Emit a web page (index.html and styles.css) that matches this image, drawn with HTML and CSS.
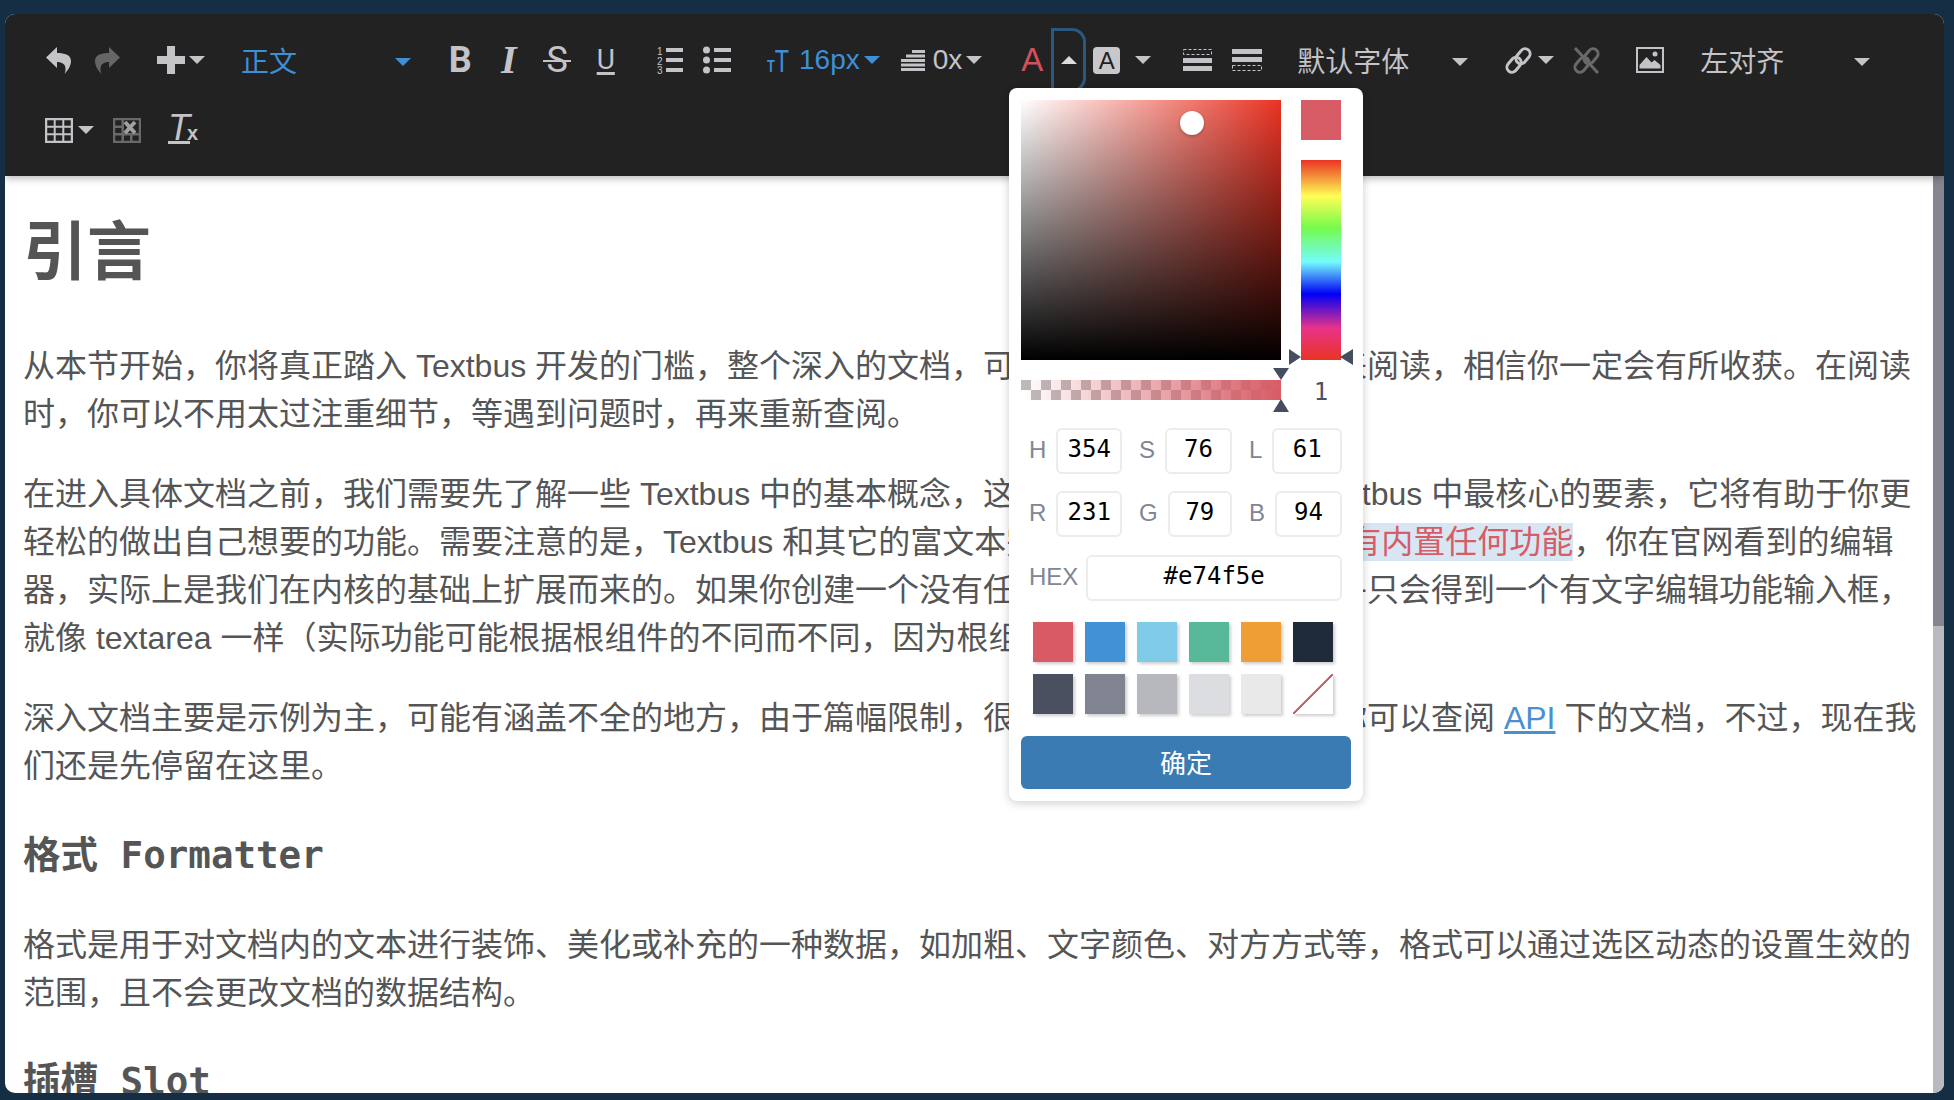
FILE: index.html
```html
<!DOCTYPE html>
<html>
<head>
    <meta charset="utf-8">
    <link rel="stylesheet" href="styles.css">
</head>
<body>
    <div class="editor">
        <div class="toolbar">
            <div class="tool-row">
                <div class="group group-history">
                    <span class="tool"><svg width="25" height="27" viewBox="0 0 25 27"><path class="fill" d="M11 0L0 10.5 11 21v-6c5 0 8.500 2 8.500 7 0 2-.5 4-1 5 3.500-4 6.500-8 6.500-13 0-6-6-8-14-8z"/></svg></span>
                    <span class="tool"><svg width="25" height="27" viewBox="0 0 25 27"><path class="fill-dim" d="M14 0l11 10.500L14 21v-6c-5 0-8.500 2-8.500 7 0 2 .5 4 1 5C3 23 0 19 0 14 0 8 6 6 14 6z"/></svg></span>
                </div>
                <div class="group group-insert">
                    <svg width="28" height="28" viewBox="0 0 28 28"><path class="fill" d="M10 0h8v10h10v8H18v10h-8V18H0v-8h10z"/></svg>
                    <i class="caret"></i>
                </div>
                <div class="select select-block active"><span>正文</span><i class="caret"></i></div>
                <div class="group group-inline">
                    <span class="tool glyph glyph-bold">B</span>
                    <span class="tool glyph glyph-italic">I</span>
                    <span class="tool glyph glyph-strike">S</span>
                    <span class="tool glyph glyph-under">U</span>
                </div>
                <div class="group group-list">
                    <span class="tool"><svg width="26" height="28" viewBox="0 0 26 28"><text class="list-num" x="0" y="9">1</text><text class="list-num" x="0" y="19">2</text><text class="list-num" x="0" y="28">3</text><path class="fill" d="M9 2h17v4H9zM9 12h17v4H9zM9 22h17v4H9z"/></svg></span>
                    <span class="tool"><svg width="28" height="28" viewBox="0 0 28 28"><circle class="fill" cx="3.500" cy="4" r="3.500"/><circle class="fill" cx="3.500" cy="14" r="3.500"/><circle class="fill" cx="3.500" cy="24" r="3.500"/><path class="fill" d="M11 2h17v4H11zM11 12h17v4H11zM11 22h17v4H11z"/></svg></span>
                </div>
                <div class="group group-size active">
                    <span class="size-icon"><small>T</small>T</span>
                    <span class="value value-size">16px</span>
                    <i class="caret"></i>
                </div>
                <div class="group group-line">
                    <svg width="24" height="21" viewBox="0 0 24 21"><path class="fill" d="M11 0h13v3H11zM5 4.500h19v3H5zM0 9h24v3H0zM0 13.500h24v3H0zM0 18h24v3H0z"/></svg>
                    <span class="value value-line">0x</span>
                    <i class="caret"></i>
                </div>
                <span class="text-color">A</span>
                <span class="color-toggle"><i class="caret caret-up"></i></span>
                <span class="back-color">A</span>
                <i class="caret caret-back"></i>
                <svg class="block-icon" width="29" height="22" viewBox="0 0 29 22"><rect class="dash" x=".5" y=".5" width="28" height="5"/><path class="fill" d="M0 9h29v5H0zM0 17h29v5H0z"/></svg>
                <svg class="block-icon block-icon-b" width="30" height="22" viewBox="0 0 30 22"><path class="fill" d="M0 0h30v5H0zM0 8h30v5H0z"/><rect class="dash" x=".5" y="16.500" width="29" height="5"/></svg>
                <div class="select select-font"><span>默认字体</span><i class="caret"></i></div>
                <div class="group group-link">
                    <svg width="27" height="27" viewBox="0 0 27 27"><g class="stroke stroke-link"><rect x="4" y="9.500" width="10" height="16.500" rx="5" transform="rotate(40 9 17.750)"/><rect x="13" y="1" width="10" height="16.500" rx="5" transform="rotate(40 18 9.250)"/></g></svg>
                    <i class="caret"></i>
                </div>
                <svg class="unlink-icon" width="27" height="27" viewBox="0 0 27 27"><g class="stroke stroke-link stroke-dim"><rect x="4" y="9.500" width="10" height="16.500" rx="5" transform="rotate(40 9 17.750)"/><rect x="13" y="1" width="10" height="16.500" rx="5" transform="rotate(40 18 9.250)"/><path d="M2 1l23 25"/></g></svg>
                <svg class="image-icon" width="28" height="26" viewBox="0 0 28 26"><rect class="stroke" x="1" y="1" width="26" height="24"/><path class="fill" d="M3.500 21.500V18l7-8 5 5.500 3-2.500 6 5v3.500z"/><circle class="fill" cx="19" cy="7" r="2.500"/></svg>
                <div class="select select-align"><span>左对齐</span><i class="caret"></i></div>
            </div>
            <div class="tool-row">
                <div class="group group-table">
                    <svg width="28" height="25" viewBox="0 0 28 25"><rect class="stroke stroke-table" x="1" y="1" width="26" height="23"/><path class="stroke" d="M9.700 1v23M18.300 1v23M1 8.700h26M1 16.300h26"/></svg>
                    <i class="caret"></i>
                </div>
                <svg class="cell-icon" width="28" height="25" viewBox="0 0 28 25"><g class="stroke stroke-dim stroke-table"><rect x="1" y="1" width="26" height="23"/><path d="M9.700 1v23M1 8.700h10M1 16.300h26M18.300 17v7"/></g><path class="cross" d="M12 4l10 11M22 4L12 15"/></svg>
                <span class="clear-format"><em>T</em><small>x</small></span>
            </div>
        </div>

        <div class="doc">
            <div class="content">
                <h1>引言</h1>
                <p>从本节开始，你将真正踏入 Textbus 开发的门槛，整个深入的文档，可能需要你花费一些时间来阅读，相信你一定会有所收获。在阅读时，你可以不用太过注重细节，等遇到问题时，再来重新查阅。</p>
                <p>在进入具体文档之前，我们需要先了解一些 Textbus 中的基本概念，这些基本概念也是整个 Textbus 中最核心的要素，它将有助于你更轻松的做出自己想要的功能。需要注意的是，Textbus 和其它的富文本完全不同，Textbus 并没<span class="picked">有内置任何功能</span>，你在官网看到的编辑器，实际上是我们在内核的基础上扩展而来的。如果你创建一个没有任何组件的编辑器，那几乎只会得到一个有文字编辑功能输入框，就像 textarea 一样（实际功能可能根据根组件的不同而不同，因为根组件是由你自己实现的）。</p>
                <p>深入文档主要是示例为主，可能有涵盖不全的地方，由于篇幅限制，很多细节无法一一列举，你可以查阅 <a href="#">API</a> 下的文档，不过，现在我们还是先停留在这里。</p>
                <h2>格式 Formatter</h2>
                <p>格式是用于对文档内的文本进行装饰、美化或补充的一种数据，如加粗、文字颜色、对方方式等，格式可以通过选区动态的设置生效的范围，且不会更改文档的数据结构。</p>
                <h2>插槽 Slot</h2>
            </div>
            <div class="scrollbar"><div class="thumb"></div></div>
        </div>

        <div class="picker">
            <div class="picker-top">
                <div class="sat-box"><div class="sat-dot"></div></div>
                <div class="picker-side">
                    <div class="preview"></div>
                    <div class="hue">
                        <i class="arrow arrow-right"></i>
                        <i class="arrow arrow-left"></i>
                    </div>
                </div>
            </div>
            <div class="alpha-row">
                <div class="alpha">
                    <i class="arrow arrow-down"></i>
                    <i class="arrow arrow-up"></i>
                </div>
                <div class="alpha-value">1</div>
            </div>
            <div class="fields">
                <label class="field">H<input type="text" value="354"></label>
                <label class="field">S<input type="text" value="76"></label>
                <label class="field">L<input type="text" value="61"></label>
            </div>
            <div class="fields fields-rgb">
                <label class="field">R<input type="text" value="231"></label>
                <label class="field">G<input type="text" value="79"></label>
                <label class="field">B<input type="text" value="94"></label>
            </div>
            <label class="field field-hex">HEX<input type="text" value="#e74f5e"></label>
            <div class="swatches">
                <span class="swatch c-red"></span>
                <span class="swatch c-blue"></span>
                <span class="swatch c-sky"></span>
                <span class="swatch c-green"></span>
                <span class="swatch c-orange"></span>
                <span class="swatch c-navy"></span>
                <span class="swatch c-slate"></span>
                <span class="swatch c-gray"></span>
                <span class="swatch c-silver"></span>
                <span class="swatch c-light"></span>
                <span class="swatch c-pale"></span>
                <span class="swatch c-none"></span>
            </div>
            <button type="button" class="confirm">确定</button>
        </div>
    </div>
</body>
</html>
```

FILE: styles.css
```css
* {
    box-sizing: border-box;
}

html, body {
    height: 100%;
}

body {
    margin: 0;
    padding: 14px 10px 7px 5px;
    overflow: hidden;
    background-color: #152e44;
    font-family: "Liberation Sans", "Noto Sans CJK SC", sans-serif;
}

.editor {
    position: relative;
    display: flex;
    flex-direction: column;
    height: 100%;
    border-radius: 10px;
    overflow: hidden;
    background-color: #fff;
}

/* Toolbar */
.toolbar {
    position: relative;
    z-index: 1;
    height: 162px;
    padding: 11px 0 11px 29px;
    background-color: #222;
    box-shadow: 0 2px 8px rgba(0, 0, 0, .3);
    color: #c3c3c8;
}

.tool-row {
    display: flex;
    align-items: center;
    height: 70px;
}

.group {
    display: flex;
    align-items: center;
    flex-shrink: 0;
}

.tool {
    display: flex;
    align-items: center;
    justify-content: center;
    width: 48.5px;
}

.fill { fill: #c3c3c8; }
.fill-dim { fill: #666; }

.stroke {
    fill: none;
    stroke: #c3c3c8;
    stroke-width: 2;
}

.stroke-dim { stroke: #696969; }
.stroke-link { stroke-width: 3; }
.stroke-table { stroke-width: 2.5; }

.cross {
    fill: none;
    stroke: #a0a0a4;
    stroke-width: 4;
}

.dash {
    fill: none;
    stroke: #c3c3c8;
    stroke-dasharray: 3 2;
}

.list-num {
    font-size: 10px;
    fill: #c3c3c8;
}

.caret {
    display: block;
    flex-shrink: 0;
    width: 0;
    height: 0;
    border-left: 8px solid transparent;
    border-right: 8px solid transparent;
    border-top: 8px solid #c3c3c8;
}

.caret-up {
    border-top: 0;
    border-bottom: 8px solid #dcdcdc;
}

.active,
.active .fill {
    color: #3f8fd6;
    fill: #3f8fd6;
}

.active .caret { border-top-color: #3f8fd6; }

.select {
    display: flex;
    align-items: center;
    justify-content: space-between;
    flex-shrink: 0;
    font-size: 28px;
}

.select .caret { margin-top: 4px; }

.group-history .tool { width: 49px; }
.group-insert { margin-left: 25px; gap: 4px; }
.select-block { margin-left: 36px; width: 170px; }
.group-inline { margin-left: 25px; }
.group-list { margin-left: 16px; }
.group-list .tool { width: 47px; }
.group-size { margin-left: 27px; gap: 4px; }
.group-line { margin-left: 21px; gap: 4px; }
.select-font { margin-left: 35px; width: 171px; }
.group-link { margin-left: 37px; gap: 6px; }
.select-align { margin-left: 36px; width: 170px; }
.group-table { gap: 5px; margin-left: 11px; }

.glyph {
    position: relative;
    height: 30px;
    line-height: 30px;
    color: #c3c3c8;
}

.glyph-bold {
    font-family: "Roboto", sans-serif;
    font-size: 36px;
    font-weight: 700;
}

.glyph-italic {
    font-family: "Liberation Serif", serif;
    font-size: 40px;
    font-style: italic;
    font-weight: 700;
}

.glyph-strike {
    font-family: "Roboto", sans-serif;
    font-size: 36px;
}

/* strike line runs past the letter on both sides */
.glyph-strike::after {
    content: "";
    position: absolute;
    top: 15px;
    left: 10px;
    width: 28px;
    height: 2px;
    background-color: #c3c3c8;
}

.glyph-under {
    font-family: "Roboto", sans-serif;
    font-size: 28px;
    text-decoration: underline;
    text-decoration-thickness: 3px;
    text-underline-offset: 3px;
}

.size-icon {
    width: 22px;
    margin-right: 6px;
    font-size: 31px;
    line-height: 30px;
    white-space: nowrap;
    transform: translateY(4px) scaleX(.75);
    transform-origin: left center;
}

.size-icon small {
    font-size: 17px;
    font-weight: 700;
}

.value {
    font-size: 28px;
    line-height: 34px;
}

.value-line {
    margin-left: 4px;
}

.text-color {
    flex-shrink: 0;
    width: 21px;
    margin-left: 39px;
    font-size: 33px;
    line-height: 34px;
    color: #d0505c;
}

.color-toggle {
    display: flex;
    align-items: center;
    justify-content: center;
    flex-shrink: 0;
    width: 35px;
    height: 64px;
    margin-left: 9px;
    border: 3px solid #2c5880;
    border-radius: 0 14px 14px 0;
}

.back-color {
    flex-shrink: 0;
    width: 27px;
    height: 27px;
    margin-left: 7px;
    border-radius: 4px;
    background-color: #c8c8cc;
    color: #222;
    font-size: 24px;
    line-height: 27px;
    text-align: center;
}

.caret-back { margin-left: 15px; }
.block-icon { flex-shrink: 0; margin-left: 32px; }
.block-icon-b { margin-left: 20px; }
.unlink-icon { flex-shrink: 0; margin-left: 19px; }
.image-icon { flex-shrink: 0; margin-left: 36px; }
.cell-icon { flex-shrink: 0; margin-left: 19px; }

.clear-format {
    display: flex;
    align-items: flex-end;
    height: 30px;
    margin: 0 0 4px 27px;
}

.clear-format em {
    font-size: 36px;
    line-height: 30px;
    text-decoration: underline;
    text-decoration-thickness: 3px;
    text-underline-offset: 1px;
}

.clear-format small {
    margin-left: -3px;
    font-size: 20px;
    font-weight: 700;
    line-height: 20px;
}

/* Document */
.doc {
    display: flex;
    flex: 1;
    min-height: 0;
}

.content {
    flex: 1;
    min-width: 0;
    padding: 0 10px 0 18px;
    overflow: hidden;
    color: #555;
    font-size: 32px;
    line-height: 48px;
}

.content h1 {
    margin: 28px 0 42px;
    font-size: 64px;
    line-height: 96px;
}

.content p {
    margin: 32px 0;
}

.content h2 {
    margin: 38px 0;
    font-family: "DejaVu Sans Mono", "Noto Sans CJK SC", monospace;
    font-size: 37.5px;
    line-height: 54px;
}

.content h2 + p {
    margin-top: 39px;
}

.content p + h2:last-child {
    margin-top: 37px;
}

.content a {
    color: #4a90d0;
}

.picked {
    padding: 1px 0;
    background-color: #d8e6f4;
    color: #d65c66;
}

.scrollbar {
    flex-shrink: 0;
    width: 11px;
    background-color: #b9bac0;
}

.thumb {
    height: 450px;
    background-color: #85868f;
}

/* Color picker popup */
.picker {
    position: absolute;
    top: 74px;
    left: 1004px;
    z-index: 2;
    width: 354px;
    height: 713px;
    padding: 12px;
    border-radius: 8px;
    background-color: #fff;
    box-shadow: 0 2px 10px rgba(0, 0, 0, .2);
}

.picker-top {
    display: flex;
    gap: 20px;
}

.sat-box {
    position: relative;
    flex-shrink: 0;
    width: 260px;
    height: 260px;
    background: linear-gradient(to top, #000, transparent), linear-gradient(to right, #fff, #ea3323);
}

.sat-dot {
    position: absolute;
    top: 11px;
    left: 159px;
    width: 24px;
    height: 24px;
    border-radius: 50%;
    background-color: #fff;
    box-shadow: 0 1px 3px rgba(0, 0, 0, .3);
}

.picker-side {
    display: flex;
    flex-direction: column;
    gap: 20px;
    width: 40px;
}

.preview {
    height: 40px;
    background-color: #d85c66;
}

.hue {
    position: relative;
    height: 200px;
    background: linear-gradient(#ea3323, #fffe54 18%, #75fb4c 34%, #73fbfd 51%, #0000f5 67%, #e8338b 84%, #ea3323);
}

.arrow {
    position: absolute;
    width: 0;
    height: 0;
}

.arrow-right {
    right: 100%;
    bottom: -5px;
    border-top: 8px solid transparent;
    border-bottom: 8px solid transparent;
    border-left: 12px solid #454d5e;
}

.arrow-left {
    left: 100%;
    margin-left: -1px;
    bottom: -5px;
    border-top: 8px solid transparent;
    border-bottom: 8px solid transparent;
    border-right: 13px solid #454d5e;
}

.alpha-row {
    display: flex;
    gap: 20px;
    height: 20px;
    margin-top: 20px;
}

.alpha {
    position: relative;
    flex-shrink: 0;
    width: 260px;
    height: 20px;
    background: linear-gradient(to right, transparent, #d85c66), repeating-conic-gradient(#fff 0 25%, #bbb 0 50%) 0 0 / 20px 20px;
}

.arrow-down {
    bottom: 100%;
    right: -8px;
    border-left: 8px solid transparent;
    border-right: 8px solid transparent;
    border-top: 12px solid #454d5e;
}

.arrow-up {
    top: 100%;
    right: -8px;
    margin-top: -1px;
    border-left: 8px solid transparent;
    border-right: 8px solid transparent;
    border-bottom: 13px solid #454d5e;
}

.alpha-value {
    width: 40px;
    color: #4a5060;
    font-family: "DejaVu Sans Mono", monospace;
    font-size: 24px;
    line-height: 24px;
    text-align: center;
}

.fields {
    display: grid;
    grid-template-columns: repeat(3, 1fr);
    column-gap: 17px;
    margin: 28px 9px 0 8px;
}

.fields-rgb {
    margin-top: 17px;
}

.field {
    display: flex;
    align-items: flex-start;
    gap: 10px;
    color: #808694;
    font-size: 24px;
    line-height: 44px;
}

.field input {
    flex: 1;
    width: 100%;
    min-width: 0;
    height: 46px;
    padding: 0 0 5px;
    border: 2px solid #ececec;
    border-radius: 6px;
    outline: 0;
    color: #000;
    font-family: "DejaVu Sans Mono", monospace;
    font-size: 24px;
    text-align: center;
}

.field-hex {
    margin: 18px 9px 0 8px;
    gap: 8px;
}

.swatches {
    display: grid;
    grid-template-columns: repeat(6, 40px);
    gap: 12px;
    margin: 21px 0 0 12px;
}

.swatch {
    height: 40px;
    box-shadow: 2px 2px 3px rgba(0, 0, 0, .2);
}

.c-red { background-color: #d75a64; }
.c-blue { background-color: #4291d5; }
.c-sky { background-color: #80cce8; }
.c-green { background-color: #58b99a; }
.c-orange { background-color: #ef9e36; }
.c-navy { background-color: #1f2a3a; }
.c-slate { background-color: #4a5060; }
.c-gray { background-color: #808490; }
.c-silver { background-color: #b7b8bd; }
.c-light { background-color: #dcdde0; }
.c-pale { background-color: #e9e9ea; }
.c-none { background: linear-gradient(to top left, #fff calc(50% - 1px), #d0606c calc(50% - 1px), #d0606c calc(50% + 1px), #fff calc(50% + 1px)); }

.confirm {
    display: block;
    width: 100%;
    height: 53px;
    margin-top: 22px;
    padding-bottom: 3px;
    border: 0;
    border-radius: 6px;
    background-color: #3b7bb3;
    color: #fff;
    font-family: inherit;
    font-size: 26px;
}
```
